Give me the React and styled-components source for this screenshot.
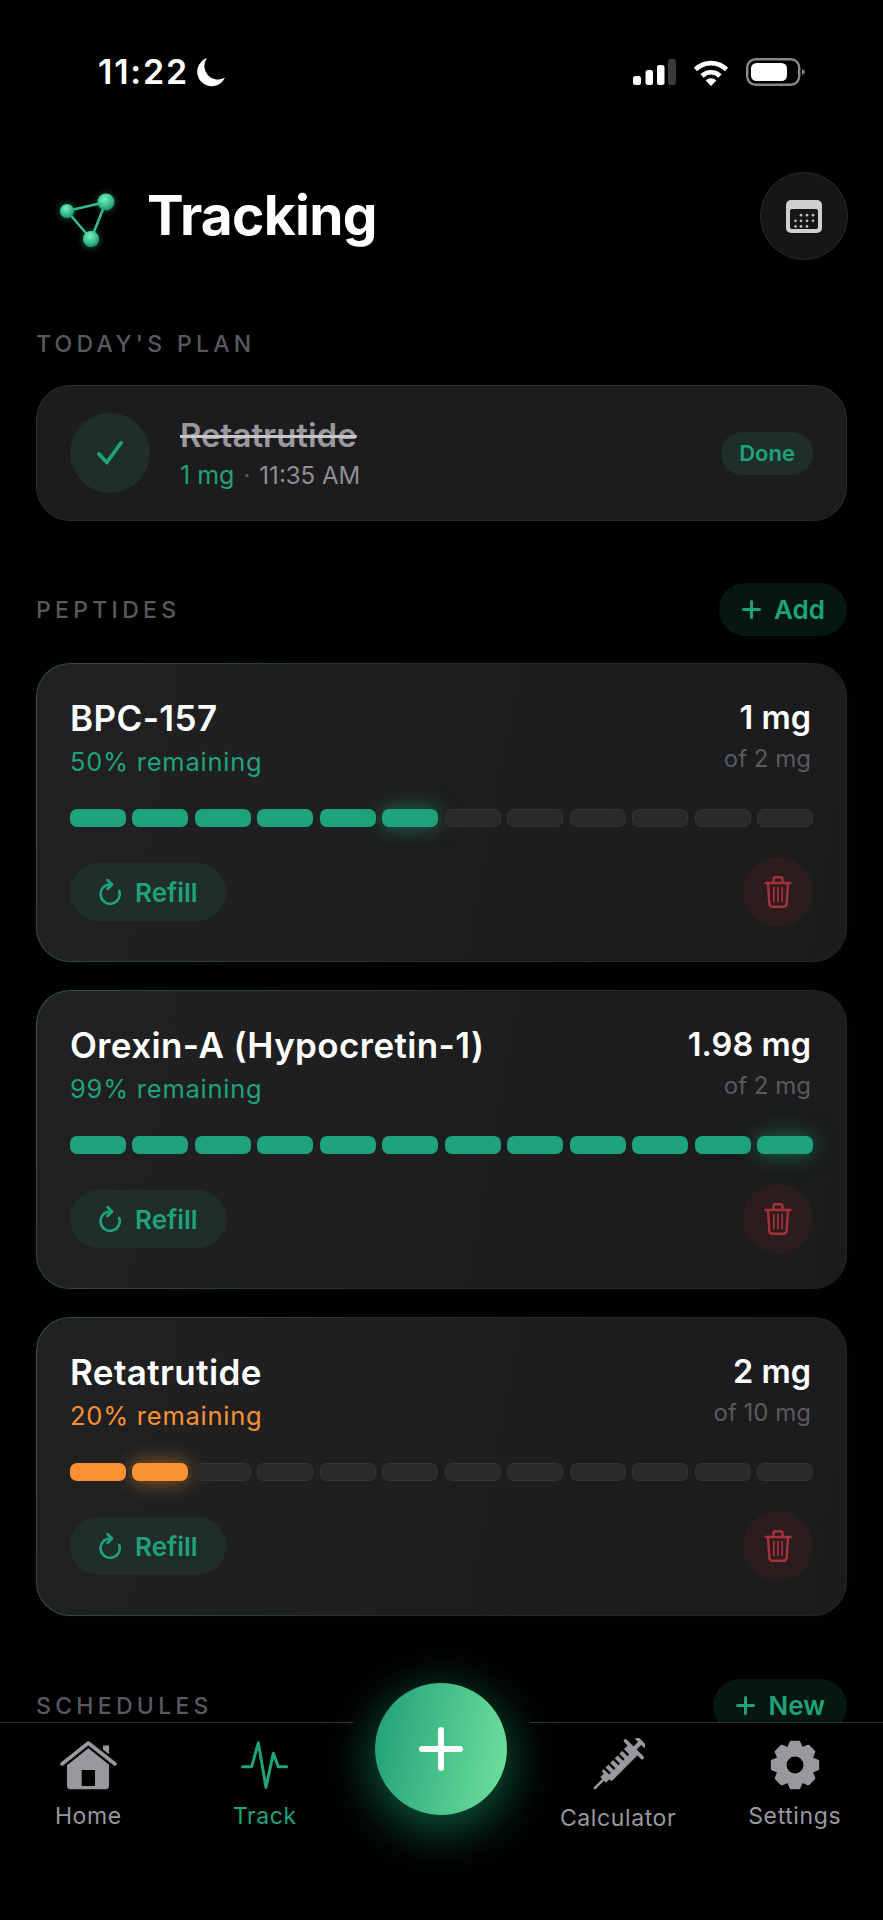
import React from "react";
import styled, { createGlobalStyle } from "styled-components";

const GREEN = "#1fa37a";
const ORANGE = "#fb9130";
const GREY = "#98989d";

const Global = createGlobalStyle`
  html, body { margin: 0; padding: 0; background: #000; }
  * { box-sizing: border-box; }
  body { font-family: Inter, "Liberation Sans", sans-serif; -webkit-font-smoothing: antialiased; }
`;

const Page = styled.div`
  position: relative;
  width: 883px;
  height: 1920px;
  overflow: hidden;
  background: #000;
  color: #fff;
`;

const StatusBar = styled.div`
  display: flex;
  align-items: center;
  justify-content: space-between;
  height: 30px;
  margin-top: 57px;
  padding: 0 78px 0 98px;
`;
const StatusLeft = styled.div`
  display: flex;
  align-items: center;
  gap: 7px;
`;
const Time = styled.span`
  font-size: 34px;
  font-weight: 600;
  line-height: 30px;
  letter-spacing: 1.8px;
`;
const StatusRight = styled.div`
  display: flex;
  align-items: center;
  gap: 17px;
`;

const Main = styled.main`
  padding: 0 36px;
`;
const Header = styled.header`
  display: flex;
  align-items: center;
  justify-content: space-between;
  height: 88px;
  margin-top: 85px;
`;
const TitleGroup = styled.div`
  display: flex;
  align-items: center;
  gap: 29px;
  padding: 0 0 2px 22px;
`;
const Title = styled.h1`
  margin: 0;
  font-size: 55px;
  font-weight: 700;
  line-height: 66px;
  letter-spacing: -0.7px;
`;
const RoundButton = styled.div`
  display: flex;
  align-items: center;
  justify-content: center;
  width: 88px;
  height: 88px;
  margin-right: -1px;
  border-radius: 50%;
  background: #161616;
  border: 1px solid #2a2a2a;
`;
const SectionRow = styled.div`
  display: flex;
  align-items: center;
  justify-content: space-between;
  margin-top: ${(p) => p.$top}px;
  margin-bottom: ${(p) => p.$bottom}px;
`;
const SectionLabel = styled.div`
  font-size: 23px;
  font-weight: 500;
  line-height: 30px;
  letter-spacing: 4.3px;
  color: #59595e;
`;
const AddPill = styled.div`
  display: flex;
  align-items: center;
  gap: 13px;
  height: 53px;
  padding: 0 22px 0 23px;
  border-radius: 27px;
  background: #05170f;
  color: ${GREEN};
  font-size: 26px;
  font-weight: 600;
`;

const PlanCard = styled.div`
  display: flex;
  align-items: center;
  height: 136px;
  padding: 0 33px;
  border-radius: 34px;
  background: #1c1c1e;
  border: 1px solid #2c2c2e;
`;
const CheckCircle = styled.div`
  display: flex;
  align-items: center;
  justify-content: center;
  flex: none;
  width: 80px;
  height: 80px;
  border-radius: 50%;
  background: #1e2e2a;
`;
const PlanInfo = styled.div`
  flex: 1;
  margin-left: 30px;
  padding-top: 5px;
`;
const PlanName = styled.div`
  width: fit-content;
  font-size: 33px;
  font-weight: 600;
  line-height: 36px;
  margin-top: -2px;
  color: #98989d;
  text-decoration: line-through;
  text-decoration-color: #c8c8cc;
  text-decoration-thickness: 2.5px;
`;
const PlanMeta = styled.div`
  display: flex;
  align-items: baseline;
  font-size: 24px;
  line-height: 32px;
  margin-top: 6px;
  color: #8e8e93;
`;
const PlanDose = styled.span`
  color: ${GREEN};
  font-size: 25px;
`;
const Dot = styled.span`
  margin: 0 9px;
  color: #5a5a5e;
`;
const DonePill = styled.div`
  display: flex;
  align-items: center;
  height: 43px;
  padding: 0 18px;
  border-radius: 22px;
  background: #1e2e2a;
  color: ${GREEN};
  font-size: 22px;
  font-weight: 600;
`;

const CardList = styled.div`
  display: flex;
  flex-direction: column;
  gap: 28px;
`;
const Card = styled.article`
  height: 299px;
  padding: 34px 33px 0;
  border-radius: 34px;
  border: 1px solid transparent;
  background:
    linear-gradient(100deg, #212123 0%, #1a1b1c 100%) padding-box,
    linear-gradient(100deg, #2b5548 0%, #262b2a 50%, #222324 100%) border-box;
  box-shadow: 0 0 26px rgba(31, 163, 122, 0.05);
`;
const CardTop = styled.div`
  display: flex;
  justify-content: space-between;
`;
const Name = styled.div`
  font-size: 35px;
  font-weight: 600;
  line-height: 40px;
  letter-spacing: 0.4px;
`;
const Remaining = styled.div`
  margin-top: 8px;
  font-size: 25.5px;
  line-height: 32px;
  font-weight: 400;
  letter-spacing: 0.75px;
  color: ${(p) => (p.$low ? ORANGE : GREEN)};
`;
const Amount = styled.div`
  padding-right: 2px;
  text-align: right;
`;
const Dose = styled.div`
  font-size: 32.5px;
  font-weight: 600;
  line-height: 40px;
`;
const OfTotal = styled.div`
  margin-top: 5px;
  font-size: 24px;
  line-height: 32px;
  color: #5a5a5e;
`;
const Bar = styled.div`
  display: grid;
  grid-template-columns: repeat(12, 1fr);
  gap: 6.5px;
  margin-top: 31px;
`;
const Segment = styled.div`
  height: 18px;
  border-radius: 7px;
  background: ${(p) => (p.$color ? p.$color : "#2a2a2c")};
  border: ${(p) => (p.$color ? "none" : "1px solid #343436")};
  box-shadow: ${(p) => (p.$glow ? `0 0 20px ${p.$color}99` : "none")};
`;
const CardFoot = styled.div`
  display: flex;
  align-items: center;
  justify-content: space-between;
  margin-top: 30px;
`;
const RefillButton = styled.div`
  display: flex;
  align-items: center;
  gap: 14px;
  width: 156px;
  height: 58px;
  padding-left: 29px;
  border-radius: 29px;
  background: #1f2e2b;
  color: ${GREEN};
  font-size: 26px;
  font-weight: 600;
`;
const TrashButton = styled.div`
  display: flex;
  align-items: center;
  justify-content: center;
  width: 70px;
  height: 70px;
  border-radius: 50%;
  background: #2c1c1d;
`;

const Nav = styled.nav`
  position: absolute;
  left: 0;
  right: 0;
  bottom: 0;
  display: grid;
  grid-template-columns: repeat(5, 1fr);
  height: 198px;
  background: #000;
`;
const NavItem = styled.div`
  display: flex;
  flex-direction: column;
  align-items: center;
  padding-top: ${(p) => (p.$tall ? 15 : 17)}px;
  border-top: 1px solid #333336;
  color: ${(p) => (p.$active ? GREEN : GREY)};
`;
const NavIcon = styled.div`
  display: flex;
  align-items: center;
  justify-content: center;
  height: ${(p) => (p.$tall ? 54 : 50)}px;
`;
const NavLabel = styled.div`
  margin-top: 12px;
  font-size: 23px;
  line-height: 28px;
  letter-spacing: 0.6px;
`;
const FabCell = styled.div`
  position: relative;
`;
const Fab = styled.div`
  position: absolute;
  top: -39px;
  left: 50%;
  margin-left: -66px;
  display: flex;
  align-items: center;
  justify-content: center;
  width: 132px;
  height: 132px;
  border-radius: 50%;
  background: linear-gradient(100deg, #1f9e78 0%, #70e29c 100%);
  box-shadow: 0 12px 52px rgba(28, 190, 130, 0.55);
`;

const Moon = () => (
  <svg width="30" height="30" viewBox="0 0 30 30" fill="#fff">
    <path d="M11 1A14.5 14.5 0 1 0 29 20.5 13.5 13.5 0 0 1 11 1Z" />
  </svg>
);

const StatusIcons = () => (
  <>
    <svg width="43" height="26" viewBox="0 0 43 26">
      <rect x="0" y="17" width="8" height="9" rx="2.5" fill="#fff" />
      <rect x="12.5" y="11" width="7.5" height="15" rx="2.5" fill="#fff" />
      <rect x="24" y="6" width="7.5" height="20" rx="2.5" fill="#fff" />
      <rect x="35" y="0" width="8" height="26" rx="2.5" fill="#3a3a3c" />
    </svg>
    <svg width="36" height="27" viewBox="0 0 36 27" fill="none">
      <path d="M2.5 10.5A22 22 0 0 1 33.5 10.5" stroke="#fff" strokeWidth="4.6" />
      <path d="M9 17A12.8 12.8 0 0 1 27 17" stroke="#fff" strokeWidth="4.6" />
      <path d="M18 27L12.6 21.4A7.6 7.6 0 0 1 23.4 21.4Z" fill="#fff" />
    </svg>
    <svg width="60" height="28" viewBox="0 0 60 28" style={{ marginRight: -1 }}>
      <rect x="1.2" y="1.2" width="52" height="25.6" rx="8.5" fill="none" stroke="#888" strokeWidth="2.4" />
      <rect x="5" y="5" width="36" height="18" rx="5.5" fill="#fff" />
      <path d="M56 11C58 11.5 59 12.6 59 14S58 16.5 56 17Z" fill="#777" />
    </svg>
  </>
);

const Logo = () => (
  <svg width="60" height="60" viewBox="0 0 60 60" style={{ overflow: "visible", marginTop: -2 }}>
    <defs>
      <radialGradient id="ball" cx="42%" cy="32%" r="70%">
        <stop offset="0%" stopColor="#7cf0bd" />
        <stop offset="55%" stopColor="#3cc690" />
        <stop offset="100%" stopColor="#1f8e68" />
      </radialGradient>
      <filter id="halo" x="-50%" y="-50%" width="200%" height="200%">
        <feGaussianBlur stdDeviation="3" />
      </filter>
    </defs>
    <g filter="url(#halo)" opacity="0.45">
      <circle cx="9" cy="27" r="8" fill="#2fc48d" />
      <circle cx="48" cy="18" r="9" fill="#2fc48d" />
      <circle cx="33" cy="55" r="9" fill="#2fc48d" />
    </g>
    <path d="M9 27L48 18L33 55Z" fill="none" stroke="#33bb8a" strokeWidth="2.6" strokeLinejoin="round" />
    <circle cx="9" cy="27" r="7" fill="url(#ball)" />
    <circle cx="48" cy="18" r="8.5" fill="url(#ball)" />
    <circle cx="33" cy="55" r="8" fill="url(#ball)" />
  </svg>
);

const CalendarIcon = () => {
  const dots = [
    [15, 15.2], [21, 15.2], [27, 15.2],
    [9.5, 20.8], [15, 20.8], [21, 20.8], [27, 20.8],
    [9.5, 26.4], [15, 26.4], [21, 26.4],
  ];
  return (
    <svg width="36" height="33" viewBox="0 0 36 33">
      <rect width="36" height="33" rx="5" fill="#cfcfd1" />
      <rect x="4" y="9" width="28" height="20" rx="2" fill="#161616" />
      {dots.map(([x, y]) => (
        <circle key={`${x}-${y}`} cx={x} cy={y} r="1.35" fill="#bdbdbf" />
      ))}
    </svg>
  );
};

const PlusIcon = ({ size = 19, stroke = 3 }) => (
  <svg width={size} height={size} viewBox={`0 0 ${size} ${size}`} fill="none" stroke="currentColor" strokeWidth={stroke} strokeLinecap="round">
    <path d={`M${size / 2} ${stroke / 2}V${size - stroke / 2}M${stroke / 2} ${size / 2}H${size - stroke / 2}`} />
  </svg>
);

const RefillIcon = () => (
  <svg width="22" height="26" viewBox="0 0 22 26" fill="none" stroke={GREEN} strokeWidth="2.6" strokeLinecap="round" strokeLinejoin="round">
    <path d="M11 5.5A9.6 9.6 0 1 0 20.2 12" />
    <path d="M8.5 1L13 5.5L8.5 10" />
  </svg>
);

const TrashIcon = () => (
  <svg width="28" height="32" viewBox="0 0 28 32" fill="none" stroke="#a8323a" strokeWidth="2.4" strokeLinecap="round" strokeLinejoin="round">
    <path d="M1.5 7H26.5" />
    <path d="M9.5 6.5V3.5C9.5 2.2 10.4 1.3 11.7 1.3H16.3C17.6 1.3 18.5 2.2 18.5 3.5V6.5" />
    <path d="M4 7L5.3 27.4C5.4 29.4 6.6 30.7 8.6 30.7H19.4C21.4 30.7 22.6 29.4 22.7 27.4L24 7" />
    <path d="M9.8 11.5V25.5M14 11.5V25.5M18.2 11.5V25.5" strokeWidth="1.7" />
  </svg>
);

const HomeIcon = () => (
  <svg width="57" height="50" viewBox="0 0 57 50" fill="currentColor">
    <path d="M43 5.5H49V17H43Z" />
    <path d="M7 24.5L28.3 7.8L49 24.5V46C49 48 47.8 49.2 45.8 49.2H10.2C8.2 49.2 7 48 7 46ZM21.7 30V46H35V30Z" fillRule="evenodd" />
    <path d="M2 24L28.3 3L55 24" fill="none" stroke="#000" strokeWidth="8" strokeLinecap="round" strokeLinejoin="round" />
    <path d="M2 24L28.3 3L55 24" fill="none" stroke="currentColor" strokeWidth="3.6" strokeLinecap="round" strokeLinejoin="round" />
  </svg>
);

const PulseIcon = () => (
  <svg width="47" height="48" viewBox="0 0 47 48" fill="none" stroke="currentColor" strokeWidth="3" strokeLinecap="round" strokeLinejoin="round">
    <path d="M1.5 25.7H10.7L17.3 1.8L25 46.4L32.3 12.3L37.3 25.7H45.5" />
  </svg>
);

const SyringeIcon = () => (
  <svg width="54" height="54" viewBox="-27 -27 54 54" fill="currentColor">
    <g transform="rotate(-45)">
      <rect x="-34" y="-1.3" width="17" height="2.6" rx="1.2" />
      <path d="M-21-4H-16V-7H21V7H-16V4H-21Z" />
      <rect x="-13" y="-7.5" width="2.4" height="8" fill="#000" />
      <rect x="-6.5" y="-7.5" width="2.4" height="8" fill="#000" />
      <rect x="0" y="-7.5" width="2.4" height="8" fill="#000" />
      <rect x="6.5" y="-7.5" width="2.4" height="8" fill="#000" />
      <rect x="13" y="-7.5" width="2.4" height="8" fill="#000" />
      <rect x="20.5" y="-13.5" width="3.6" height="27" rx="1.6" />
      <rect x="23" y="-2.2" width="9" height="4.4" />
      <rect x="30.5" y="-6.8" width="3.6" height="13.6" rx="1.6" />
    </g>
  </svg>
);

const gearPath = (() => {
  const teeth = 8;
  const pts = [];
  const cx = 25;
  const cy = 25;
  for (let i = 0; i < teeth; i += 1) {
    const a = (i * 2 * Math.PI) / teeth - Math.PI / 2;
    const step = (2 * Math.PI) / teeth;
    [[-0.5, 17.5], [-0.22, 23], [0.22, 23], [0.5, 17.5]].forEach(([off, r]) => {
      const t = a + off * step;
      pts.push(`${(cx + r * Math.cos(t)).toFixed(2)} ${(cy + r * Math.sin(t)).toFixed(2)}`);
    });
  }
  return `M${pts.join("L")}Z`;
})();

const GearIcon = () => (
  <svg width="50" height="50" viewBox="0 0 50 50" fill="currentColor">
    <path d={gearPath} stroke="currentColor" strokeWidth="3" strokeLinejoin="round" />
    <circle cx="25" cy="25" r="8.5" fill="#000" />
  </svg>
);

const CheckIcon = () => (
  <svg width="26" height="24" viewBox="0 0 26 24" fill="none" stroke={GREEN} strokeWidth="3.8" strokeLinecap="round" strokeLinejoin="round">
    <path d="M2 13L9.8 21.5L24 2" />
  </svg>
);

const peptides = [
  { name: "BPC-157", pct: 50, dose: "1 mg", total: "of 2 mg", filled: 6 },
  { name: "Orexin-A (Hypocretin-1)", pct: 99, dose: "1.98 mg", total: "of 2 mg", filled: 12 },
  { name: "Retatrutide", pct: 20, dose: "2 mg", total: "of 10 mg", filled: 2, low: true },
];

const PeptideCard = ({ name, pct, dose, total, filled, low }) => (
  <Card>
    <CardTop>
      <div>
        <Name>{name}</Name>
        <Remaining $low={low}>{pct}% remaining</Remaining>
      </div>
      <Amount>
        <Dose>{dose}</Dose>
        <OfTotal>{total}</OfTotal>
      </Amount>
    </CardTop>
    <Bar>
      {Array.from({ length: 12 }, (_, i) => (
        <Segment key={i} $color={i < filled ? (low ? ORANGE : GREEN) : null} $glow={i === filled - 1} />
      ))}
    </Bar>
    <CardFoot>
      <RefillButton>
        <RefillIcon />
        Refill
      </RefillButton>
      <TrashButton>
        <TrashIcon />
      </TrashButton>
    </CardFoot>
  </Card>
);

export default function App() {
  return (
    <Page>
      <Global />
      <StatusBar>
        <StatusLeft>
          <Time>11:22</Time>
          <Moon />
        </StatusLeft>
        <StatusRight>
          <StatusIcons />
        </StatusRight>
      </StatusBar>
      <Main>
        <Header>
          <TitleGroup>
            <Logo />
            <Title>Tracking</Title>
          </TitleGroup>
          <RoundButton>
            <CalendarIcon />
          </RoundButton>
        </Header>

        <SectionRow $top={69} $bottom={26}>
          <SectionLabel>TODAY'S PLAN</SectionLabel>
        </SectionRow>
        <PlanCard>
          <CheckCircle>
            <CheckIcon />
          </CheckCircle>
          <PlanInfo>
            <PlanName>Retatrutide</PlanName>
            <PlanMeta>
              <PlanDose>1 mg</PlanDose>
              <Dot>·</Dot>
              11:35 AM
            </PlanMeta>
          </PlanInfo>
          <DonePill>Done</DonePill>
        </PlanCard>

        <SectionRow $top={62} $bottom={27}>
          <SectionLabel>PEPTIDES</SectionLabel>
          <AddPill>
            <PlusIcon />
            Add
          </AddPill>
        </SectionRow>
        <CardList>
          {peptides.map((p) => (
            <PeptideCard key={p.name} {...p} />
          ))}
        </CardList>

        <SectionRow $top={63} $bottom={0}>
          <SectionLabel>SCHEDULES</SectionLabel>
          <AddPill>
            <PlusIcon />
            New
          </AddPill>
        </SectionRow>
      </Main>

      <Nav>
        <NavItem>
          <NavIcon><HomeIcon /></NavIcon>
          <NavLabel>Home</NavLabel>
        </NavItem>
        <NavItem $active>
          <NavIcon><PulseIcon /></NavIcon>
          <NavLabel>Track</NavLabel>
        </NavItem>
        <FabCell>
          <Fab>
            <svg width="44" height="44" viewBox="0 0 44 44" fill="none" stroke="#fff" strokeWidth="6" strokeLinecap="round">
              <path d="M22 3V41M3 22H41" />
            </svg>
          </Fab>
        </FabCell>
        <NavItem $tall>
          <NavIcon $tall><SyringeIcon /></NavIcon>
          <NavLabel>Calculator</NavLabel>
        </NavItem>
        <NavItem>
          <NavIcon><GearIcon /></NavIcon>
          <NavLabel>Settings</NavLabel>
        </NavItem>
      </Nav>
    </Page>
  );
}
